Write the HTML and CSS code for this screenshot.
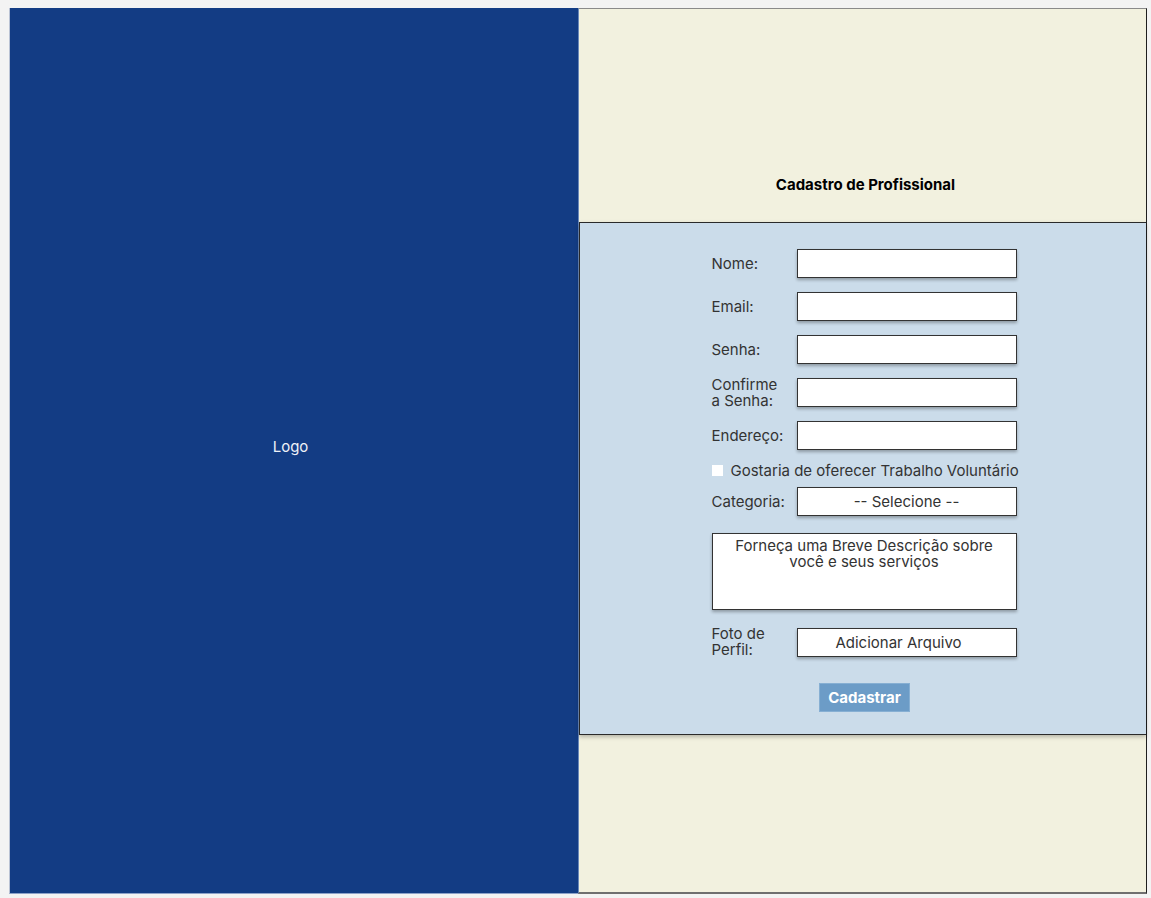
FILE: index.html
```html
<!DOCTYPE html>
<html lang="pt">
<head>
<meta charset="utf-8">
<link rel="stylesheet" href="styles.css">
</head>
<body>
<div class="page">
  <div class="brand"><span>Logo</span></div>
  <div class="side">
    <div class="head"><h1>Cadastro de Profissional</h1></div>
    <div class="formbox">
      <form class="form">
        <div class="row"><label>Nome:</label><div class="field"></div></div>
        <div class="row"><label>Email:</label><div class="field"></div></div>
        <div class="row"><label>Senha:</label><div class="field"></div></div>
        <div class="row"><label class="two">Confirme<br>a Senha:</label><div class="field"></div></div>
        <div class="row"><label>Endereço:</label><div class="field"></div></div>
        <div class="check"><span class="box"></span><span>Gostaria de oferecer Trabalho Voluntário</span></div>
        <div class="row"><label>Categoria:</label><div class="field center">-- Selecione --</div></div>
        <div class="area">Forneça uma Breve Descrição sobre<br>você e seus serviços</div>
        <div class="row foto"><label class="two">Foto de<br>Perfil:</label><div class="field center file">Adicionar Arquivo</div></div>
        <div class="actions"><span class="btn">Cadastrar</span></div>
      </form>
    </div>
    <div class="foot"></div>
  </div>
</div>
</body>
</html>
```
FILE: styles.css
```css
html, body { margin: 0; padding: 0; }
body {
  background: #f3f3f3;
  font-family: Inter, "Noto Sans", sans-serif;
  color: #333;
  width: 1151px;
  height: 898px;
  overflow: hidden;
}
.page {
  display: flex;
  padding: 8px 0 0 9px;
  height: 886px;
}
.brand {
  width: 569px;
  height: 886px;
  background: #133c84;
  border-left: 1px solid #b9c2d4;
  border-bottom: 1px solid #8da2c8;
  display: flex;
  align-items: center;
  justify-content: center;
  box-sizing: border-box;
  color: #eef1f7;
  font-size: 15px;
}
.brand span { margin-top: -8px; margin-left: -7px; }
.side {
  width: 569px;
  height: 886px;
  box-sizing: border-box;
  background: #f2f1df;
  border-top: 1px solid #8a8a8a;
  border-right: 1px solid #1f1f1f;
  border-bottom: 2px solid #6f6f6f;
  border-left: 1px solid #6a88b8;
  display: flex;
  flex-direction: column;
}
.head {
  height: 213px;
  display: flex;
  align-items: flex-end;
  justify-content: center;
}
.head h1 {
  margin: 0 0 28px 0;
  font-size: 15px;
  font-weight: 700;
  color: #000;
  padding-left: 6px;
}
.formbox {
  height: 513px;
  box-sizing: border-box;
  background: #cbdcea;
  border: 1px solid #2a2a2a;
  border-width: 1px 0 1px 1px;
  box-shadow: 0 2px 4px rgba(0,0,0,0.25);
  display: flex;
  justify-content: center;
}
.form {
  width: 305px;
  margin-left: 2px;
  padding-top: 26px;
  display: flex;
  flex-direction: column;
}
.row {
  display: flex;
  align-items: center;
  height: 29px;
  margin-bottom: 14px;
}
.row label {
  width: 85px;
  flex-shrink: 0;
  font-size: 15px;
  line-height: 16px;
  color: #333;
}
.field {
  width: 220px;
  height: 29px;
  flex-shrink: 0;
  box-sizing: border-box;
  background: #fff;
  border: 1px solid #333;
  box-shadow: 0 2px 3px rgba(0,0,0,0.3);
  font-size: 15px;
  color: #333;
}
.field.center {
  display: flex;
  align-items: center;
  justify-content: center;
}
.field.file { padding-right: 16px; }
.check {
  display: flex;
  align-items: center;
  height: 14px;
  margin: -1px 0 10px 0;
  font-size: 15px;
  white-space: nowrap;
}
.check .box {
  width: 11px;
  height: 11px;
  flex-shrink: 0;
  background: #fff;
  margin-right: 8px;
}
.area {
  width: 305px;
  height: 77px;
  box-sizing: border-box;
  background: #fff;
  border: 1px solid #333;
  box-shadow: 0 2px 3px rgba(0,0,0,0.3);
  text-align: center;
  font-size: 15px;
  line-height: 16px;
  padding-top: 4px;
  margin: 3px 0 18px 0;
}
.foto label { padding-top: 0; margin-top: -1px; }
.actions {
  display: flex;
  justify-content: center;
  margin-top: 12px;
  padding-left: 1px;
}
.btn {
  width: 91px;
  height: 29px;
  box-sizing: border-box;
  background: #6c9cc7;
  border: 1px solid #86afd3;
  color: #fff;
  font-weight: 700;
  font-size: 15px;
  display: flex;
  align-items: center;
  justify-content: center;
}
.foot { flex: 1; }
```
